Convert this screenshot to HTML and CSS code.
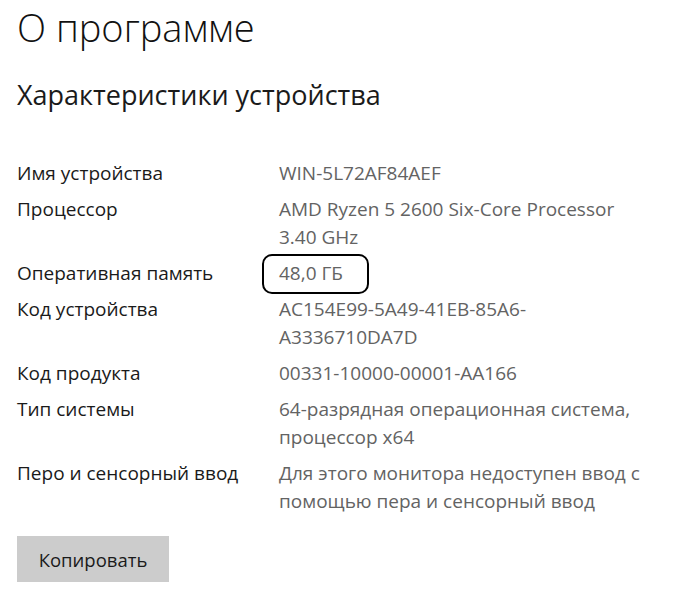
FILE: index.html
```html
<!DOCTYPE html>
<html lang="ru">
<head>
<meta charset="utf-8">
<title>О программе</title>
<link rel="stylesheet" href="styles.css">
</head>
<body>
<main class="page">
  <h1 class="title">О программе</h1>
  <h2 class="section">Характеристики устройства</h2>
  <dl class="specs">
    <div class="row"><dt>Имя устройства</dt><dd>WIN-5L72AF84AEF</dd></div>
    <div class="row"><dt>Процессор</dt><dd>AMD Ryzen 5 2600 Six-Core Processor<br>3.40 GHz</dd></div>
    <div class="row"><dt>Оперативная память</dt><dd class="marked">48,0 ГБ<span class="mark"></span></dd></div>
    <div class="row"><dt>Код устройства</dt><dd>AC154E99-5A49-41EB-85A6-<br>A3336710DA7D</dd></div>
    <div class="row"><dt>Код продукта</dt><dd>00331-10000-00001-AA166</dd></div>
    <div class="row"><dt>Тип системы</dt><dd>64-разрядная операционная система,<br>процессор x64</dd></div>
    <div class="row"><dt>Перо и сенсорный ввод</dt><dd>Для этого монитора недоступен ввод с<br>помощью пера и сенсорный ввод</dd></div>
  </dl>
  <button class="copy" type="button">Копировать</button>
</main>
</body>
</html>
```

FILE: styles.css
```css
html, body {
  margin: 0;
  padding: 0;
  background: #ffffff;
}
body {
  font-family: "Open Sans", "Noto Sans", sans-serif;
  color: #1a1a1a;
}
.page {
  padding: 1px 0 0 17px;
  display: flex;
  flex-direction: column;
  align-items: flex-start;
}
.title {
  margin: 0;
  font-size: 38px;
  font-weight: 300;
  line-height: 52px;
  color: #111;
}
.section {
  margin: 25px 0 0 0;
  font-size: 27px;
  font-weight: 400;
  line-height: 34px;
  color: #1a1a1a;
}
.specs {
  margin: 47px 0 0 0;
  display: flex;
  flex-direction: column;
  gap: 8px;
}
.row {
  display: grid;
  grid-template-columns: 262px auto;
  font-size: 19px;
  line-height: 28px;
}
.row dt {
  margin: 0;
  color: #1a1a1a;
}
.row dd {
  margin: 0;
  color: #636363;
}
.marked {
  position: relative;
}
.mark {
  position: absolute;
  box-sizing: border-box;
  left: -17px;
  top: -5px;
  width: 107px;
  height: 40px;
  border: 2.5px solid #000;
  border-radius: 10px;
}
.copy {
  margin-top: 21px;
  width: 152px;
  height: 46px;
  border: none;
  background: #cccccc;
  font-family: "Open Sans", "Noto Sans", sans-serif;
  font-size: 18.5px;
  color: #1a1a1a;
  padding: 0;
}
```
